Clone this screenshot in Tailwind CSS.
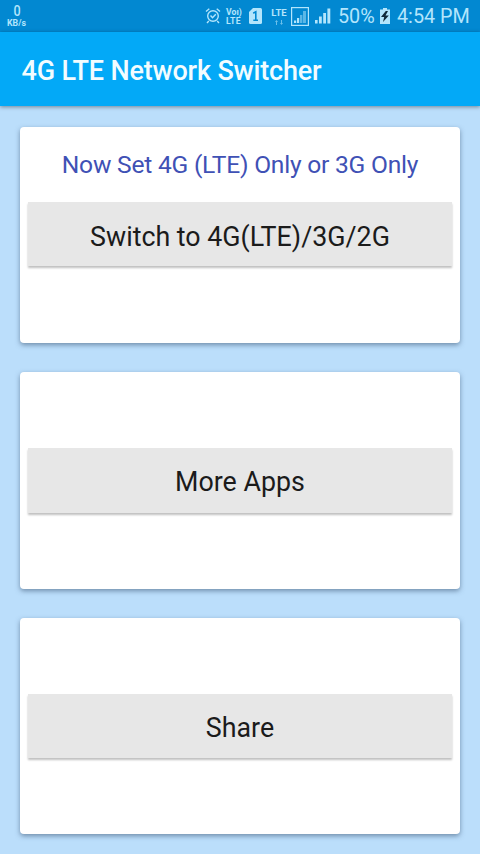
<!DOCTYPE html>
<html lang="en">
<head>
<meta charset="utf-8">
<title>4G LTE Network Switcher</title>
<script src="https://cdn.jsdelivr.net/npm/@tailwindcss/browser@4"></script>
</head>
<body class="w-[480px] h-[854px] overflow-hidden bg-[#bbdefb] font-['Roboto',sans-serif] flex flex-col">
  <!-- Status bar -->
  <header class="h-8 shrink-0 bg-[#0288d1] text-[#b3e5fc] flex items-center pl-[7px] pr-[10px]">
    <div class="flex flex-col items-center w-[19px]">
      <span class="text-[14px] leading-[14px] font-medium scale-x-90">0</span>
      <span class="text-[8.8px] leading-[10px] font-bold whitespace-nowrap">KB/s</span>
    </div>
    <div class="ml-auto flex items-center">
      <svg class="w-4 h-[18px]" viewBox="0 0 16 18" fill="none" stroke="currentColor" stroke-width="1.4">
        <circle cx="8" cy="9" r="5.3"/>
        <path d="M1 4.5 4.3 1.8M15 4.5 11.7 1.8M3.8 14 2 16M12.2 14 14 16M5.5 8.5 7.5 10.8 10.8 7.2"/>
      </svg>
      <div class="ml-[5px] w-[17px] pt-px flex flex-col text-[8.7px] leading-[9px] font-bold whitespace-nowrap">
        <span>Voı)</span><span class="tracking-[0.3px]">LTE</span>
      </div>
      <svg class="ml-[6px] w-[13px] h-4" viewBox="0 0 13 16">
        <path d="M4 0H11.5Q13 0 13 1.5V14.5Q13 16 11.5 16H1.5Q0 16 0 14.5V4Z" fill="currentColor"/>
        <path d="M4.2 5.2 6.8 3.8V12M4.3 12.3H9" fill="none" stroke="#0288d1" stroke-width="1.6"/>
      </svg>
      <div class="ml-[8px] w-[18px] h-[19px] flex flex-col items-center">
        <span class="text-[9.5px] leading-[12px] font-bold">LTE</span>
        <svg class="w-2 h-[5px] mt-px opacity-60" viewBox="0 0 8 5" fill="currentColor"><path d="M0 2 1.5 0 3 2H2V5H1V2ZM5 3 6.5 5 8 3H7V0H6V3Z"/></svg>
      </div>
      <svg class="ml-[3px] w-[18px] h-[19px]" viewBox="0 0 18 19">
        <rect x=".6" y=".6" width="16.8" height="17.8" fill="none" stroke="currentColor" stroke-width="1.2"/>
        <path d="M3 13.5h2.2V16H3zM6 11h2.2v5H6z" fill="currentColor"/>
        <path d="M9 8h2.4v8H9zM12 4h3v12h-3z" fill="currentColor" opacity=".5"/>
      </svg>
      <svg class="ml-[6px] w-4 h-4" viewBox="0 0 16 16" fill="currentColor"><path d="M0 12h2.6v3.5H0zM4 8.5h2.8v7H4zM8.2 5H11v10.5H8.2zM12.4.5h2.9v15h-2.9z"/></svg>
      <span class="ml-[7px] w-[37px] pt-[2px] text-[19.8px] leading-8 whitespace-nowrap">50%</span>
      <svg class="ml-[5px] w-[10px] h-4" viewBox="0 0 10 16">
        <path d="M3 0H7V1.5H10V16H0V1.5H3Z" fill="#b3e5fc"/>
        <path d="M5.8 3 1 9H4.2L3 14 8.8 7.5H5.5L8 3Z" fill="#102a3a"/>
      </svg>
      <span class="ml-[7px] w-[73px] pt-[2px] text-[19.8px] leading-8 whitespace-nowrap">4:54 PM</span>
    </div>
  </header>
  <!-- App bar -->
  <div class="relative h-[74px] shrink-0 bg-[#03a9f7] pl-[21.5px] pt-[5px] flex items-center shadow-[0_1px_4px_rgba(0,0,0,0.4)]">
    <h1 class="text-[27px] leading-none font-medium tracking-[-0.17px] text-[#f2fcff] whitespace-nowrap">4G LTE Network Switcher</h1>
  </div>
  <!-- Cards -->
  <main class="flex flex-col gap-[29px] px-5 pt-[20.5px]">
    <section class="h-[216.5px] shrink-0 bg-white rounded-[4px] px-2 shadow-[0_2px_5px_rgba(50,75,105,0.55)]">
      <p class="h-[75.5px] text-center text-[24.6px] leading-[76px] tracking-[-0.23px] text-[#3f51b5] whitespace-nowrap">Now Set 4G (LTE) Only or 3G Only</p>
      <button class="block w-full h-[64px] bg-[#e7e7e7] text-[26.8px] leading-[70px] text-[#1b1b1b] text-center whitespace-nowrap shadow-[0_2px_2px_rgba(0,0,0,0.25)]">Switch to 4G(LTE)/3G/2G</button>
    </section>
    <section class="h-[216.5px] shrink-0 bg-white rounded-[4px] px-2 pt-[76px] shadow-[0_2px_5px_rgba(50,75,105,0.55)]">
      <button class="block w-full h-[64.5px] bg-[#e7e7e7] text-[26.8px] leading-[68px] text-[#1b1b1b] text-center shadow-[0_2px_2px_rgba(0,0,0,0.25)]">More Apps</button>
    </section>
    <section class="h-[216.5px] shrink-0 bg-white rounded-[4px] px-2 pt-[76px] shadow-[0_2px_5px_rgba(50,75,105,0.55)]">
      <button class="block w-full h-[64.5px] bg-[#e7e7e7] text-[26.8px] leading-[68px] text-[#1b1b1b] text-center shadow-[0_2px_2px_rgba(0,0,0,0.25)]">Share</button>
    </section>
  </main>
</body>
</html>
